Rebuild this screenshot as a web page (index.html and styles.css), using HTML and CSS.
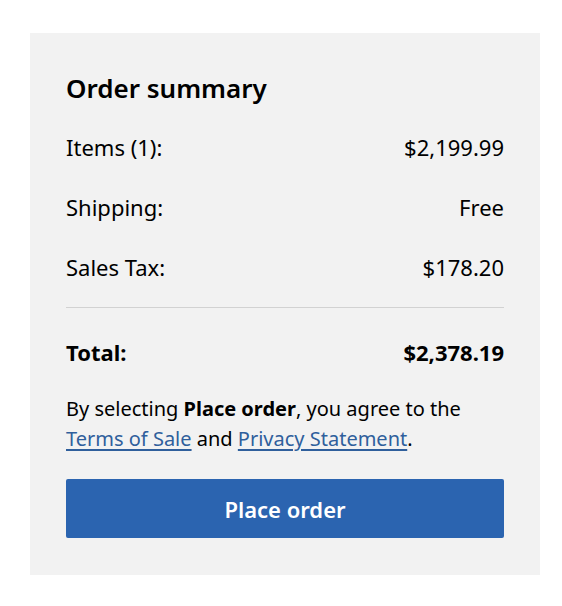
FILE: index.html
```html
<!DOCTYPE html>
<html lang="en">
<head>
<meta charset="utf-8">
<title>Order summary</title>
<link rel="stylesheet" href="styles.css">
</head>
<body>
<section class="summary">
  <h2 class="summary-title">Order summary</h2>
  <div class="row"><span>Items (1):</span><span>$2,199.99</span></div>
  <div class="row"><span>Shipping:</span><span>Free</span></div>
  <div class="row"><span>Sales Tax:</span><span>$178.20</span></div>
  <hr class="divider">
  <div class="row total"><span>Total:</span><span>$2,378.19</span></div>
  <p class="terms">By selecting <strong>Place order</strong>, you agree to the <a href="#">Terms of Sale</a> and <a href="#">Privacy Statement</a>.</p>
  <button class="place-order" type="button">Place order</button>
</section>
</body>
</html>
```
FILE: styles.css
```css
html, body {
  margin: 0;
  padding: 0;
  background: #ffffff;
}
body {
  font-family: "Noto Sans", "Open Sans", sans-serif;
  color: #000000;
}
.summary {
  box-sizing: border-box;
  width: 510px;
  margin: 33px 0 0 30px;
  padding: 37px 36px 37px;
  background: #f2f2f2;
  display: flex;
  flex-direction: column;
}
.summary-title {
  margin: 0 0 11px;
  font-size: 26px;
  line-height: 36px;
  font-weight: 600;
}
.row {
  display: flex;
  justify-content: space-between;
  align-items: center;
  height: 60px;
  font-size: 22px;
}
.divider {
  margin: 10px 0 14px;
  border: 0;
  border-top: 1px solid #d2d2d2;
  height: 0;
}
.total {
  font-weight: 700;
}
.terms {
  margin: 12px 0 25px;
  font-size: 20px;
  line-height: 30px;
}
.terms strong {
  font-weight: 700;
}
.terms a {
  color: #2f5f9c;
  text-decoration: underline;
  text-underline-offset: 3px;
}
.place-order {
  height: 59px;
  border: 0;
  border-radius: 2px;
  background: #2b64b0;
  color: #ffffff;
  font-family: inherit;
  font-size: 22px;
  font-weight: 600;
  cursor: pointer;
}
```
